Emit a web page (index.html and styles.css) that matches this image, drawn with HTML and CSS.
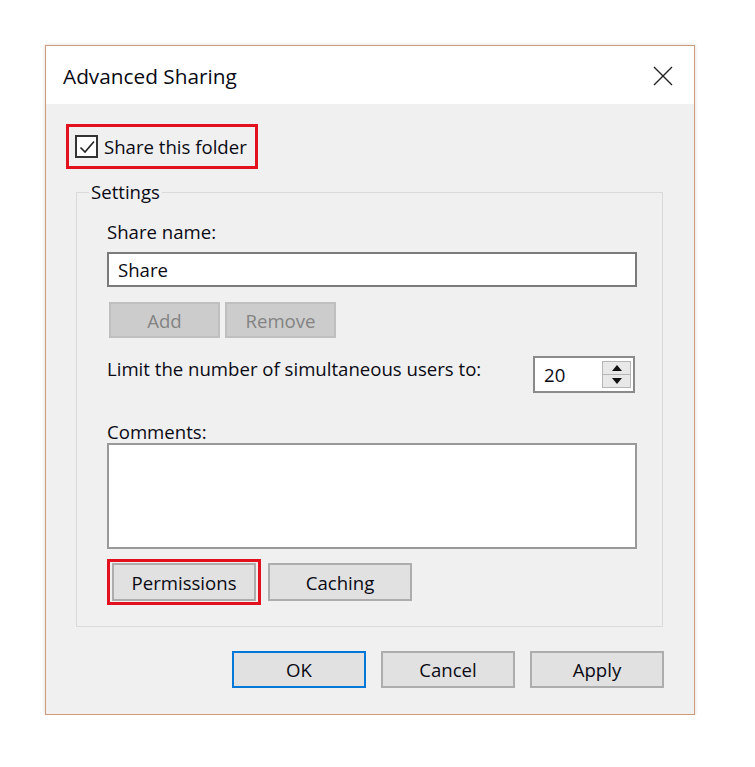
FILE: index.html
```html
<!DOCTYPE html>
<html>
<head>
<meta charset="utf-8">
<link rel="stylesheet" href="styles.css">
</head>
<body>
<div class="dialog">
  <div class="titlebar">
    <span class="title">Advanced Sharing</span>
    <svg class="close" width="20" height="20" viewBox="0 0 20 20"><path d="M1 1L19 19M19 1L1 19" stroke="#222" stroke-width="1.4" fill="none"/></svg>
  </div>
  <div class="body">
    <div class="hl share-frame">
      <span class="checkbox"><svg width="18" height="18" viewBox="0 0 18 18"><path d="M2.5 9.5L7 14L16 3.5" stroke="#222" stroke-width="1.6" fill="none"/></svg></span>
      <span class="lbl">Share this folder</span>
    </div>
    <fieldset class="group">
      <legend>Settings</legend>
      <div class="group-inner">
        <div class="lbl">Share name:</div>
        <div class="textbox">Share</div>
        <div class="btnrow">
          <span class="btn disabled">Add</span>
          <span class="btn disabled">Remove</span>
        </div>
        <div class="limitrow">
          <span class="lbl">Limit the number of simultaneous users to:</span>
          <div class="spin">
            <span class="spinval">20</span>
            <span class="spinbtns">
              <span class="sb"><svg width="10" height="6" viewBox="0 0 10 6"><path d="M5 0L10 6H0Z" fill="#111"/></svg></span>
              <span class="sb"><svg width="10" height="6" viewBox="0 0 10 6"><path d="M0 0H10L5 6Z" fill="#111"/></svg></span>
            </span>
          </div>
        </div>
        <div class="lbl comments-label">Comments:</div>
        <div class="textarea"></div>
        <div class="btnrow2">
          <span class="hl perm-frame"><span class="btn big">Permissions</span></span>
          <span class="btn big">Caching</span>
        </div>
      </div>
    </fieldset>
    <div class="footer">
      <span class="btn foot default">OK</span>
      <span class="btn foot">Cancel</span>
      <span class="btn foot">Apply</span>
    </div>
  </div>
</div>
</body>
</html>
```
FILE: styles.css
```css
html, body {
  margin: 0;
  padding: 0;
  background: #ffffff;
}
body {
  font-family: "Open Sans", "Noto Sans", sans-serif;
  font-size: 18.6px;
  color: #0a0a14;
}
.dialog {
  margin: 45px 0 0 45px;
  width: 648px;
  height: 668px;
  border: 1.5px solid #cf9b76;
  box-shadow: 0 0 4px rgba(0,0,0,0.15);
  display: flex;
  flex-direction: column;
  background: #f0f0f0;
}
.titlebar {
  height: 58px;
  flex: none;
  background: #fff;
  display: flex;
  align-items: center;
  justify-content: space-between;
  padding: 0 21px 0 17px;
}
.title {
  font-size: 20.8px;
  margin-top: 2px;
}
.close {
  margin-top: 2px;
}
.body {
  flex: 1;
  padding: 20px 30px 0 20px;
  display: flex;
  flex-direction: column;
}
.hl {
  border: 3px solid #e3101e;
}
.share-frame {
  width: 180px;
  height: 39px;
  display: flex;
  align-items: center;
  padding-left: 6px;
  box-sizing: content-box;
}
.checkbox {
  width: 19px;
  height: 19px;
  border: 2px solid #333;
  background: #fff;
  display: flex;
  align-items: center;
  justify-content: center;
  margin-right: 6px;
}
.lbl {
  line-height: 22px;
}
.group {
  margin: 12px 0 0 10px;
  width: 587px;
  box-sizing: border-box;
  border: 1px solid #dadada;
  padding: 0;
  min-width: 0;
}
.group legend {
  margin-left: 12px;
  padding: 0 2px;
  line-height: 22px;
}
.group-inner {
  padding: 18px 25px 21px 30px;
}
.textbox {
  margin-top: 9px;
  height: 35px;
  box-sizing: border-box;
  border: 2px solid #7a7a7a;
  background: #fff;
  padding-left: 9px;
  display: flex;
  align-items: center;
}
.btnrow {
  margin-top: 15px;
  margin-left: 2px;
  display: flex;
  gap: 5px;
}
.btn {
  display: flex;
  align-items: center;
  justify-content: center;
  box-sizing: border-box;
  background: #e1e1e1;
  border: 2px solid #adadad;
}
.btn.disabled {
  width: 111px;
  height: 36px;
  background: #cccccc;
  border-color: #bfbfbf;
  color: #838383;
}
.limitrow {
  margin-top: 18px;
  display: flex;
  justify-content: space-between;
  align-items: flex-start;
}
.limitrow .lbl {
  margin-top: 2px;
}
.spin {
  width: 102px;
  height: 37px;
  box-sizing: border-box;
  border: 2px solid #8a8a8a;
  background: #fff;
  display: flex;
  align-items: center;
  justify-content: space-between;
  margin-right: 2px;
}
.spinval {
  padding-left: 9px;
}
.spinbtns {
  width: 29px;
  height: 27px;
  margin-right: 2px;
  display: flex;
  flex-direction: column;
  border: 1px solid #b5b5b5;
  box-sizing: border-box;
  background: #e8e8e8;
}
.sb {
  flex: 1;
  display: flex;
  align-items: center;
  justify-content: center;
}
.sb + .sb {
  border-top: 1px solid #b5b5b5;
}
.comments-label {
  margin-top: 28px;
}
.textarea {
  height: 106px;
  box-sizing: border-box;
  border: 2px solid #999;
  background: #fff;
}
.btnrow2 {
  margin-top: 10px;
  display: flex;
  align-items: center;
  gap: 7px;
}
.perm-frame {
  display: flex;
  padding: 1px 2px;
}
.btn.big {
  width: 144px;
  height: 38px;
}
.footer {
  margin-top: 24px;
  display: flex;
  justify-content: flex-end;
  gap: 15px;
}
.btn.foot {
  width: 134px;
  height: 37px;
}
.btn.default {
  border-color: #0078d7;
}
```
